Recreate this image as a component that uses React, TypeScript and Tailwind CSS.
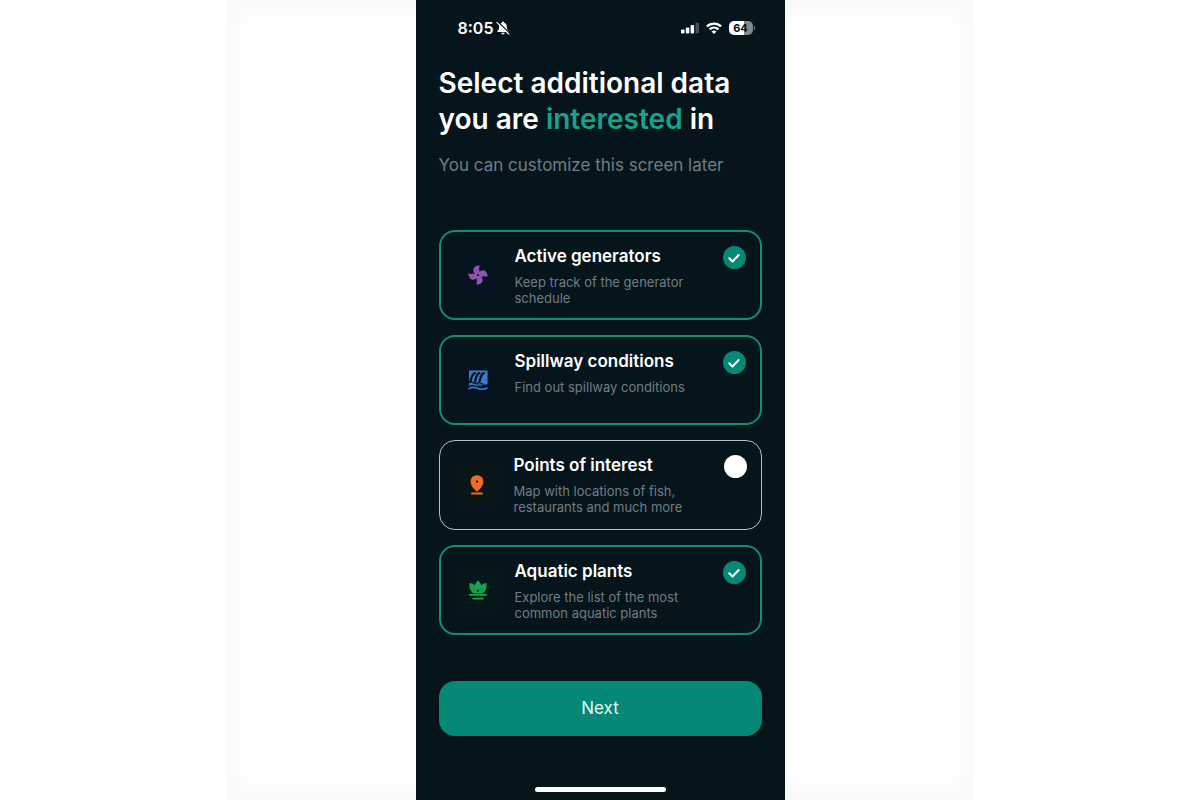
import { useState } from "react";
import type { ReactNode } from "react";
import clsx from "clsx";

const blade = "M10 8.200 11.800 7.200C10.900 5 10.900 2.700 11.800.5C8.600.3 5.700 1.800 5.300 4.400C5.100 6.400 6.200 8.200 8.200 10Z";

function GeneratorIcon() {
  return (
    <svg viewBox="0 0 20 20" className="size-5 text-[#8e54b0]" fill="currentColor" aria-hidden="true">
      {[0, 90, 180, 270].map((angle) => (
        <path key={angle} d={blade} transform={`rotate(${angle} 10 10)`} />
      ))}
      <circle cx="10" cy="10" r="3" />
      <circle cx="10" cy="10" r="1" fill="#07152a" />
    </svg>
  );
}

function SpillwayIcon() {
  return (
    <svg viewBox="0 0 20 20" className="size-5 text-[#3f78cf]" fill="none" stroke="currentColor" strokeLinecap="round" aria-hidden="true">
      <path d="M1 .5H19.500V14.500H1Z" fill="currentColor" stroke="none" />
      <path d="M6.800 3.200C4 4 3.700 7.500 2.500 11M11.300 3.200C8.500 4 8.200 7.500 7 11.500M15.800 3.200C13 4 12.700 7.500 11.500 11.500" stroke="#051723" strokeWidth="2.400" />
      <path d="M0 13.200C2 11.800 4 11.800 6 13.200C8 14.200 10 11.800 12.500 13.200L15 14" stroke="#051723" strokeWidth="1.200" />
      <path d="M0 16.200H20" stroke="#051723" strokeWidth="2" />
      <path d="M1 15.200C3 14 5 14 7 15C9 16 11 14.500 14 15.200" strokeWidth="1.100" />
      <path d="M1 18.600C4 16.900 7 17.100 10 18.400C13 19.600 16 19.500 19 18" strokeWidth="1.600" />
    </svg>
  );
}

function PinIcon() {
  return (
    <svg viewBox="0 0 20 20" className="size-5 text-[#f4692b]" fill="currentColor" aria-hidden="true">
      <path
        fillRule="evenodd"
        d="M10 .3C6.200.3 3.600 3.100 3.600 6.500C3.600 10.500 6.900 14.200 10 16.700C13.100 14.200 16.400 10.500 16.400 6.500C16.400 3.100 13.800.3 10 .3ZM10 5.400A1.200 1.200 0 1 1 10 7.800A1.200 1.200 0 1 1 10 5.400Z"
      />
      <rect x="4.200" y="17.500" width="11.600" height="2" rx=".5" />
    </svg>
  );
}

function LotusIcon() {
  return (
    <svg viewBox="0 0 20 20" className="size-5 text-[#18a34b]" fill="currentColor" aria-hidden="true">
      <path
        fillRule="evenodd"
        d="M10 .6C11.600 2 12.600 3.600 13.200 5.200C14.800 3.900 16.600 3.200 18.600 3C19 7.500 17.800 11.400 14.600 13.500H5.400C2.200 11.400 1 7.500 1.400 3C3.400 3.200 5.200 3.900 6.800 5.200C7.400 3.600 8.400 2 10 .6ZM10 9.800A1 1 0 1 0 10 11.800A1 1 0 1 0 10 9.800Z"
      />
      <rect x="1" y="14" width="18" height="1.700" rx=".8" />
      <rect x="4.200" y="17.700" width="11.600" height="1.700" rx=".8" />
      <path d="M5 7.500 7 10.500M15 7.500 13 10.500" stroke="#0f8040" strokeWidth=".7" />
    </svg>
  );
}

type Option = {
  id: string;
  title: string;
  description: string;
  icon: ReactNode;
  tint: string;
};

const options: Option[] = [
  {
    id: "generators",
    title: "Active generators",
    description: "Keep track of the generator schedule",
    icon: <GeneratorIcon />,
    tint: "bg-[#061422]",
  },
  {
    id: "spillway",
    title: "Spillway conditions",
    description: "Find out spillway conditions",
    icon: <SpillwayIcon />,
    tint: "bg-[#051520]",
  },
  {
    id: "poi",
    title: "Points of interest",
    description: "Map with locations of fish, restaurants and much more",
    icon: <PinIcon />,
    tint: "bg-[#0b1618]",
  },
  {
    id: "plants",
    title: "Aquatic plants",
    description: "Explore the list of the most common aquatic plants",
    icon: <LotusIcon />,
    tint: "bg-[#041819]",
  },
];

function StatusBar() {
  return (
    <div className="flex h-14 items-center justify-between pr-[30px] pl-[42px] text-white">
      <div className="flex items-center gap-[3px]">
        <span className="text-base font-semibold">8:05</span>
        <svg viewBox="0 0 14 14" className="size-3.5" aria-hidden="true">
          <path d="M7 .6C6.300.6 5.900 1.100 5.900 1.700C4 2.200 3.200 3.800 3.200 5.600C3.200 8 2.600 8.900 1.400 10.100V11H12.600V10.100C11.400 8.900 10.800 8 10.800 5.600C10.800 3.800 10 2.200 8.100 1.700C8.100 1.100 7.700.6 7 .6ZM5.300 11.800C5.500 12.800 6.100 13.400 7 13.400C7.900 13.400 8.500 12.800 8.700 11.800Z" fill="currentColor" />
          <path d="M1.800.7 13.600 12.300" stroke="#06141c" strokeWidth="1.200" />
          <path d="M.8 1.300 12.800 13" stroke="currentColor" strokeWidth="1.100" strokeLinecap="round" />
        </svg>
      </div>
      <div className="flex items-center gap-[7px]">
        <svg viewBox="0 0 18 12" className="h-3 w-[18px]" fill="currentColor" aria-hidden="true">
          <rect x="0" y="7.500" width="3.500" height="4" rx="1" />
          <rect x="4.800" y="5.500" width="3.500" height="6" rx="1" />
          <rect x="9.600" y="3" width="3.500" height="8.500" rx="1" />
          <rect x="14.500" y=".5" width="3.500" height="11" rx="1" opacity=".25" />
        </svg>
        <svg viewBox="0 0 16 12" className="h-3 w-4" fill="none" stroke="currentColor" strokeWidth="2.300" aria-hidden="true">
          <path d="M.9 4.400C4.900.6 11.100.6 15.100 4.400" />
          <path d="M3.600 7.300C6.100 5 9.900 5 12.400 7.300" />
          <path d="M8 11.900 5.500 9.400C6.900 8.200 9.100 8.200 10.500 9.400Z" fill="currentColor" stroke="none" />
        </svg>
        <div className="flex items-center gap-px">
          <span className="flex h-[14px] w-6 items-center justify-center rounded-[5px] bg-linear-to-r from-white from-64% to-[#7d8a90] to-64% text-[11px] leading-none font-bold text-[#06141c]">
            64
          </span>
          <span className="h-1 w-px rounded-r bg-[#7d8a90]" />
        </div>
      </div>
    </div>
  );
}

function OptionCard({ option, checked, onToggle }: { option: Option; checked: boolean; onToggle: () => void }) {
  return (
    <label
      htmlFor={option.id}
      className={clsx(
        "flex min-h-[90px] cursor-pointer rounded-2xl py-3 pr-[14px] pl-4",
        checked ? "border-2 border-[#178a78]" : "border border-[#b5bfc4]"
      )}
    >
      <span className={clsx("flex size-[42px] shrink-0 items-center justify-center self-center rounded-xl", option.tint)}>
        {option.icon}
      </span>
      <span className="ml-4 flex-1">
        <span className="block text-[17px] leading-6 font-semibold text-white">{option.title}</span>
        <span className="mt-1.5 block max-w-[180px] text-[13px] leading-4 text-[#707e84]">{option.description}</span>
      </span>
      <span className="mt-0.5 grid size-[23px] shrink-0 place-items-center">
        <input
          id={option.id}
          type="checkbox"
          checked={checked}
          onChange={onToggle}
          className="col-start-1 row-start-1 size-[23px] cursor-pointer appearance-none rounded-full bg-white checked:bg-[#058876]"
        />
        {checked && (
          <svg
            viewBox="0 0 12 12"
            className="pointer-events-none col-start-1 row-start-1 size-3 text-white"
            fill="none"
            stroke="currentColor"
            strokeWidth="2"
            strokeLinecap="round"
            strokeLinejoin="round"
            aria-hidden="true"
          >
            <path d="M1.300 6.300 4.500 9.500 10.700 3" />
          </svg>
        )}
      </span>
    </label>
  );
}

export default function App() {
  const [selected, setSelected] = useState<string[]>(["generators", "spillway", "plants"]);

  const toggle = (id: string) => {
    setSelected((prev) => (prev.includes(id) ? prev.filter((item) => item !== id) : [...prev, id]));
  };

  return (
    <div className="min-h-screen bg-white font-['Inter',sans-serif]">
      <div className="mx-auto flex min-h-screen max-w-[746px] justify-center bg-[#fefffe] shadow-[inset_0_0_24px_8px_#f7f8f7]">
        <main className="flex w-full max-w-[369px] flex-col bg-[#06141c]">
          <StatusBar />

          <div className="flex flex-1 flex-col px-[23px] pt-[9px]">
            <h1 className="text-[28px] leading-9 font-semibold text-white">
              Select additional data
              <br />
              you are <span className="text-[#14a38b]">interested</span> in
            </h1>
            <p className="mt-4 text-[17px] leading-6 text-[#707e84]">You can customize this screen later</p>

            <div className="mt-[53px] flex flex-col gap-[15px]">
              {options.map((option) => (
                <OptionCard
                  key={option.id}
                  option={option}
                  checked={selected.includes(option.id)}
                  onToggle={() => toggle(option.id)}
                />
              ))}
            </div>

            <button type="button" className="mt-[46px] h-[55px] cursor-pointer rounded-2xl bg-[#058876] text-[17px] text-[#e6f7f4]">
              Next
            </button>

            <div className="mx-auto mt-auto mb-2 h-[5px] w-[131px] rounded-full bg-white" />
          </div>
        </main>
      </div>
    </div>
  );
}
